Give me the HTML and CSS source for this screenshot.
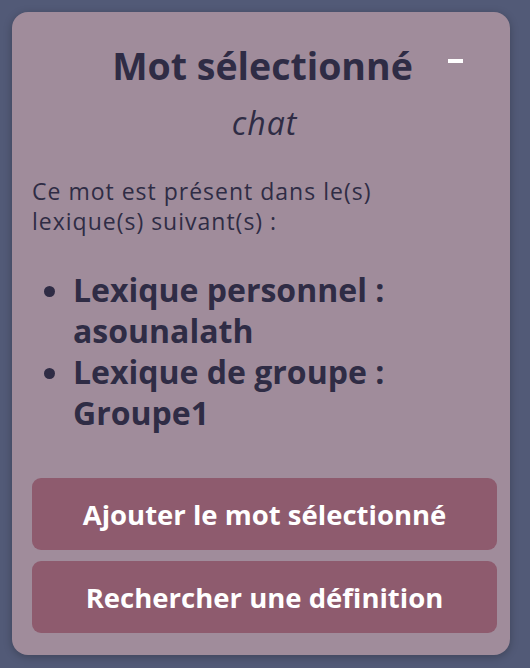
FILE: index.html
```html
<!DOCTYPE html>
<html lang="fr">
<head>
<meta charset="utf-8">
<link rel="stylesheet" href="styles.css">
</head>
<body>
<div class="card">
  <div class="header">
    <h1 class="title">Mot sélectionné</h1>
    <button class="toggle" aria-label="Réduire"></button>
  </div>
  <p class="word">chat</p>
  <p class="desc">Ce mot est présent dans le(s) lexique(s) suivant(s) :</p>
  <ul class="lexicons">
    <li>Lexique personnel : asounalath</li>
    <li>Lexique de groupe : Groupe1</li>
  </ul>
  <div class="actions">
    <button class="btn">Ajouter le mot sélectionné</button>
    <button class="btn">Rechercher une définition</button>
  </div>
</div>
</body>
</html>
```
FILE: styles.css
```css
html, body {
  margin: 0;
  padding: 0;
  height: 100%;
}
body {
  background: #525a77;
  font-family: "Open Sans", "Noto Sans", sans-serif;
  color: #2f2c45;
}
.card {
  margin: 12px 20px 0 12px;
  background: #a08c9b;
  border-radius: 16px;
  padding: 0 13px 22px 20px;
  box-shadow: 0 2px 8px rgba(0,0,0,0.25);
}
.header {
  position: relative;
  display: flex;
  justify-content: center;
  padding-top: 28px;
}
.title {
  margin: 0 0 0 -4px;
  font-size: 37.5px;
  font-weight: 700;
  line-height: 52px;
}
.toggle {
  position: absolute;
  right: 34px;
  top: 47px;
  width: 15px;
  height: 4px;
  background: #ffffff;
  border: 0;
  padding: 0;
}
.word {
  margin: 11px 0 0;
  text-align: center;
  font-style: italic;
  font-size: 32px;
  letter-spacing: 1px;
  line-height: 40px;
}
.desc {
  margin: 33px 0 0;
  max-width: 420px;
  font-size: 23px;
  font-weight: 500;
  letter-spacing: 1px;
  line-height: 30px;
}
.lexicons {
  margin: 33px 0 0;
  padding-left: 41px;
  font-size: 32px;
  font-weight: 700;
  line-height: 41px;
}
.actions {
  display: flex;
  flex-direction: column;
  gap: 11px;
  margin-top: 45px;
}
.btn {
  height: 72px;
  border: 0;
  border-radius: 9px;
  background: #8e5b6e;
  color: #ffffff;
  font-family: inherit;
  font-size: 27.5px;
  font-weight: 700;
}
```
